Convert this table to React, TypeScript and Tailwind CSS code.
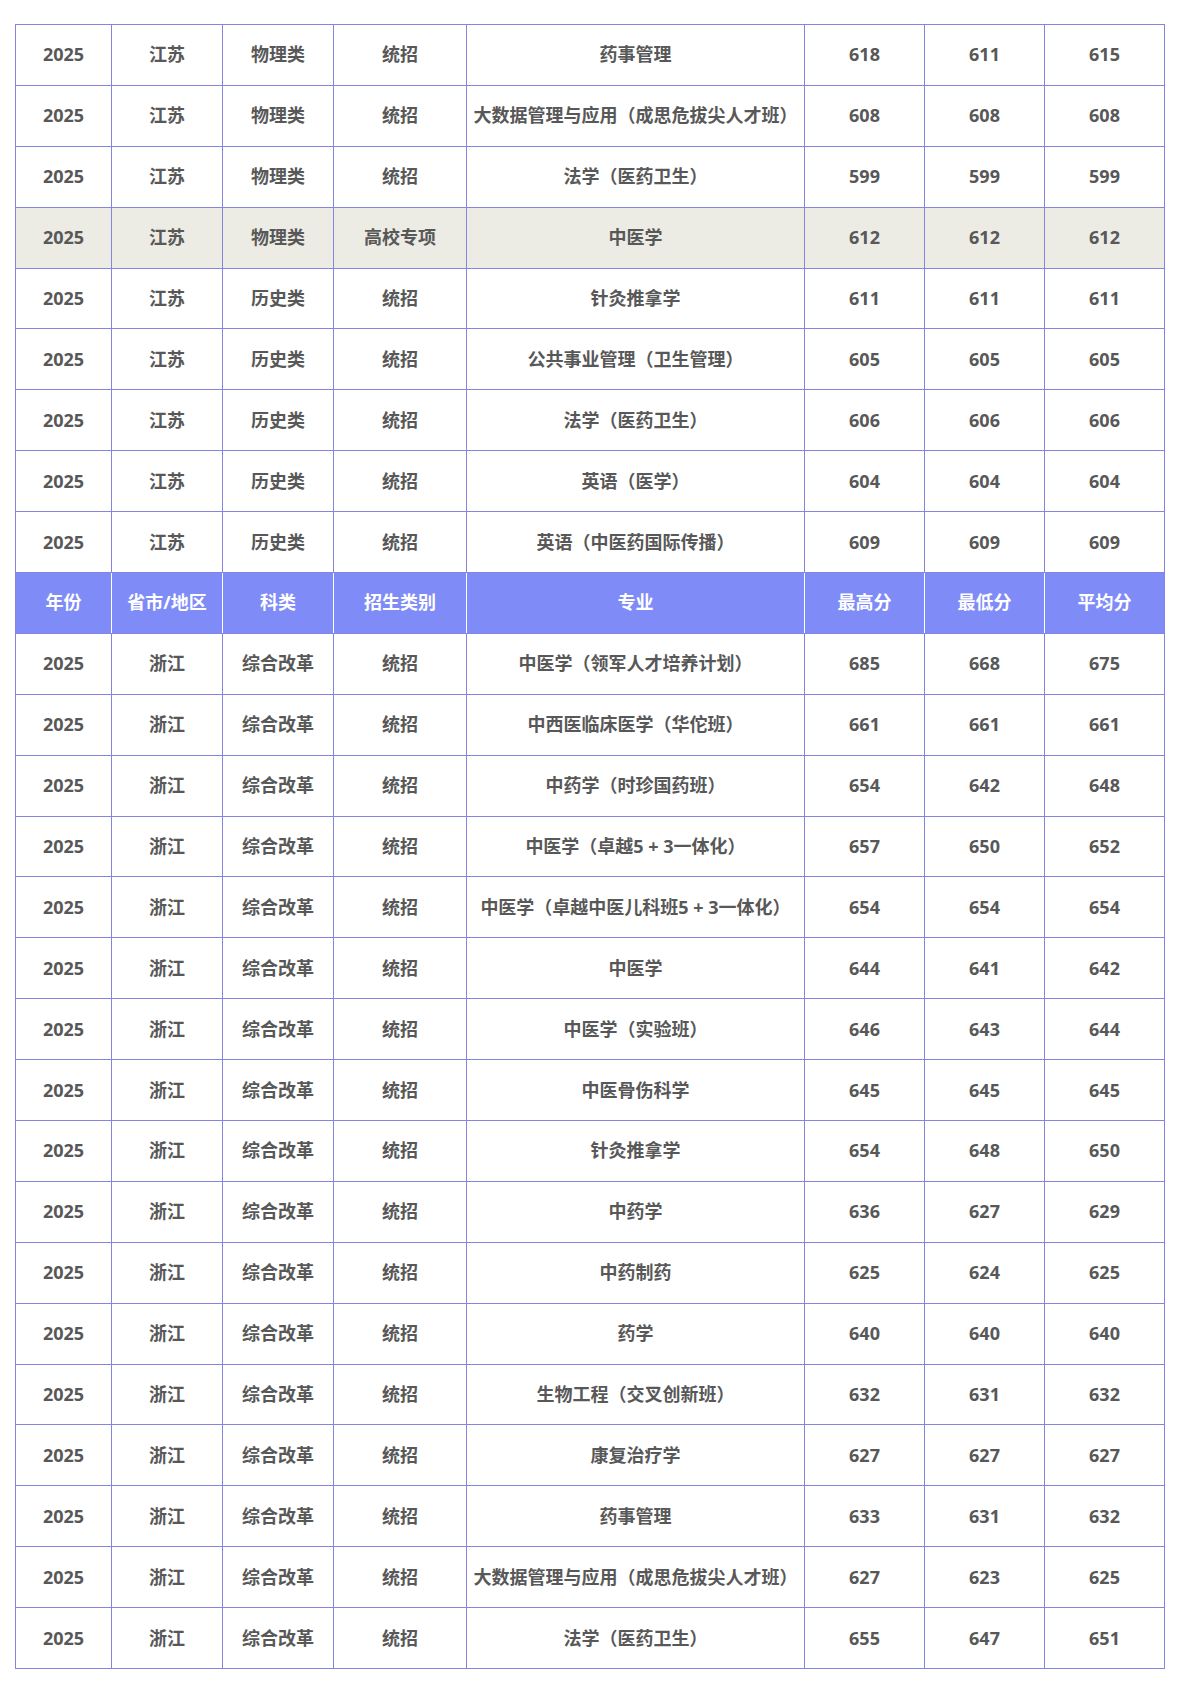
import React from "react";

type Row = [string, string, string, string, string, string, string, string, boolean?];

const js: Row[] = [
  ["2025", "江苏", "物理类", "统招", "药事管理", "618", "611", "615"],
  ["2025", "江苏", "物理类", "统招", "大数据管理与应用（成思危拔尖人才班）", "608", "608", "608"],
  ["2025", "江苏", "物理类", "统招", "法学（医药卫生）", "599", "599", "599"],
  ["2025", "江苏", "物理类", "高校专项", "中医学", "612", "612", "612", true],
  ["2025", "江苏", "历史类", "统招", "针灸推拿学", "611", "611", "611"],
  ["2025", "江苏", "历史类", "统招", "公共事业管理（卫生管理）", "605", "605", "605"],
  ["2025", "江苏", "历史类", "统招", "法学（医药卫生）", "606", "606", "606"],
  ["2025", "江苏", "历史类", "统招", "英语（医学）", "604", "604", "604"],
  ["2025", "江苏", "历史类", "统招", "英语（中医药国际传播）", "609", "609", "609"],
];

const zj: [string, string, string, string][] = [
  ["中医学（领军人才培养计划）", "685", "668", "675"],
  ["中西医临床医学（华佗班）", "661", "661", "661"],
  ["中药学（时珍国药班）", "654", "642", "648"],
  ["中医学（卓越5 + 3一体化）", "657", "650", "652"],
  ["中医学（卓越中医儿科班5 + 3一体化）", "654", "654", "654"],
  ["中医学", "644", "641", "642"],
  ["中医学（实验班）", "646", "643", "644"],
  ["中医骨伤科学", "645", "645", "645"],
  ["针灸推拿学", "654", "648", "650"],
  ["中药学", "636", "627", "629"],
  ["中药制药", "625", "624", "625"],
  ["药学", "640", "640", "640"],
  ["生物工程（交叉创新班）", "632", "631", "632"],
  ["康复治疗学", "627", "627", "627"],
  ["药事管理", "633", "631", "632"],
  ["大数据管理与应用（成思危拔尖人才班）", "627", "623", "625"],
  ["法学（医药卫生）", "655", "647", "651"],
];

const headers = ["年份", "省市/地区", "科类", "招生类别", "专业", "最高分", "最低分", "平均分"];
const widths = ["w-[96px]", "w-[111px]", "w-[111px]", "w-[133px]", "w-[338px]", "w-[120px]", "w-[120px]", "w-[120px]"];

const font = { fontFamily: '"Open Sans", "Noto Sans CJK SC", sans-serif' };

function DataRow({ r }: { r: Row }) {
  const hl = r[8];
  return (
    <tr className={`h-[60.9px] ${hl ? "bg-[#ecebe4]" : "bg-white"}`}>
      {r.slice(0, 8).map((c, i) => (
        <td
          key={i}
          className="border border-[#8585e0] text-center align-middle text-[18px] font-bold text-[#585858] p-0 whitespace-nowrap"
        >
          {c as string}
        </td>
      ))}
    </tr>
  );
}

export default function App() {
  return (
    <div className="w-[1190px] h-[1683px] bg-white pt-[24px] pl-[15px]" style={font}>
      <table className="border-collapse table-fixed w-[1150px]">
        <colgroup>
          {widths.map((w, i) => (
            <col key={i} className={w} />
          ))}
        </colgroup>
        <tbody>
          {js.map((r, i) => (
            <DataRow key={"j" + i} r={r} />
          ))}
          <tr className="h-[60.9px] bg-[#7f8cf7]">
            {headers.map((h, i) => (
              <td
                key={i}
                className={`text-center align-middle text-[18px] font-bold text-white p-0 border-y border-y-[#8585e0] ${
                  i === 0 ? "border-l border-l-[#8585e0]" : "border-l border-l-white"
                } ${i === 7 ? "border-r border-r-[#8585e0]" : ""}`}
              >
                {h}
              </td>
            ))}
          </tr>
          {zj.map((z, i) => (
            <DataRow key={"z" + i} r={["2025", "浙江", "综合改革", "统招", z[0], z[1], z[2], z[3]]} />
          ))}
        </tbody>
      </table>
    </div>
  );
}
